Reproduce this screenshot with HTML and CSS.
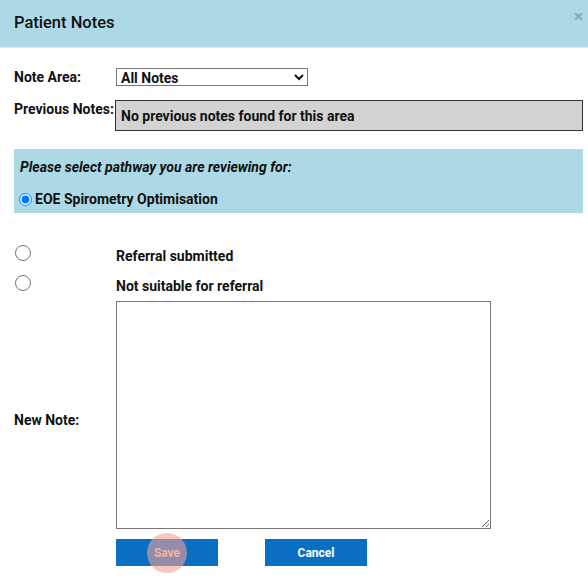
FILE: index.html
```html
<!DOCTYPE html>
<html>
<head>
<meta charset="utf-8">
<link rel="stylesheet" href="styles.css">
</head>
<body>
<div class="dialog">
  <div class="header">
    <span class="title">Patient Notes</span>
    <span class="close">×</span>
  </div>
  <div class="content">
    <div class="row row-area">
      <label class="lbl">Note Area:</label>
      <select class="area-select">
        <option>All Notes</option>
      </select>
    </div>
    <div class="row row-prev">
      <label class="lbl lbl-prev">Previous Notes:</label>
      <div class="prev-box">No previous notes found for this area</div>
    </div>
    <div class="pathway">
      <div class="pathway-q">Please select pathway you are reviewing for:</div>
      <div class="pathway-opt">
        <input type="radio" name="pw" checked class="pw-radio">
        <span>EOE Spirometry Optimisation</span>
      </div>
    </div>
    <div class="options">
      <div class="opt opt-1">
        <input type="radio" name="outcome" class="out-radio">
        <span class="opt-label">Referral submitted</span>
      </div>
      <div class="opt opt-2">
        <input type="radio" name="outcome" class="out-radio">
        <span class="opt-label">Not suitable for referral</span>
      </div>
    </div>
    <div class="row row-note">
      <label class="lbl lbl-note">New Note:</label>
      <textarea class="note"></textarea>
    </div>
    <div class="buttons">
      <button class="btn btn-save">Save</button>
      <button class="btn">Cancel</button>
    </div>
  </div>
</div>
</body>
</html>
```

FILE: styles.css
```css
* { box-sizing: border-box; }
html, body {
  margin: 0;
  padding: 0;
  background: #fff;
}
body {
  font-family: Roboto, "Liberation Sans", sans-serif;
  color: #111;
  width: 588px;
  height: 580px;
  overflow: hidden;
}
.header {
  height: 48px;
  background: #add8e6;
  border-bottom: 1px solid #e4e8ea;
  display: flex;
  align-items: center;
  justify-content: space-between;
  padding: 0 5px 2px 14px;
}
.title {
  font-size: 16.5px;
  font-weight: 500;
  color: #111;
}
.close {
  font-size: 17px;
  font-weight: 700;
  color: #8fa6ad;
  line-height: 1;
  margin-top: -12px;
}
.content {
  padding: 20px 5px 0 14px;
  font-size: 14px;
  font-weight: 700;
}
.row {
  display: grid;
  grid-template-columns: 102px 1fr;
}
.lbl {
  line-height: 16px;
}
.row-area {
  align-items: center;
  height: 18px;
}
.area-select {
  width: 192px;
  height: 18px;
  font-family: Roboto, "Liberation Sans", sans-serif;
  font-size: 14px;
  font-weight: 700;
  color: #111;
  padding: 0;
  border: 1px solid #767676;
  border-radius: 0;
  background: #fff;
}
.row-prev {
  margin-top: 14px;
  grid-template-columns: 101px 1fr;
}
.lbl-prev {
  padding-top: 1px;
}
.prev-box {
  height: 31px;
  background: #d3d3d3;
  border: 1px solid #333;
  padding-left: 5px;
  display: flex;
  align-items: center;
  line-height: 16px;
  padding-top: 1px;
}
.pathway {
  margin-top: 18px;
  background: #add8e6;
  height: 64px;
  padding: 10px 6px 0 0;
}
.pathway-q {
  font-style: italic;
  line-height: 16px;
  padding-left: 6px;
}
.pathway-opt {
  margin-top: 16px;
  display: flex;
  align-items: center;
  line-height: 16px;
}
.pw-radio {
  width: 13px;
  height: 13px;
  margin: 0 3px 0 5px;
}
.options {
  margin-top: 31px;
}
.opt {
  display: grid;
  grid-template-columns: 102px 1fr;
  align-items: start;
}
.opt-1 { height: 30px; }
.opt-2 { height: 27px; }
.out-radio {
  width: 16px;
  height: 16px;
  margin: 1px 0 0 1px;
}
.opt-label {
  line-height: 16px;
  padding-top: 4px;
}
.row-note {
  align-items: center;
}
.lbl-note {
  padding-top: 10px;
}
.note {
  width: 375px;
  height: 228px;
  border: 1px solid #767676;
  resize: both;
  margin: 0;
  display: block;
}
.buttons {
  margin-top: 10px;
  padding-left: 102px;
  display: flex;
  gap: 47px;
}
.btn {
  width: 102px;
  height: 27px;
  border: none;
  background: #0a6fc2;
  color: #fff;
  font-family: Roboto, "Liberation Sans", sans-serif;
  font-size: 12px;
  font-weight: 700;
  padding: 0;
  margin: 0;
}
.btn-save {
  position: relative;
  color: #f3d0cf;
}
.btn-save::after {
  content: "";
  position: absolute;
  left: 31px;
  top: -6px;
  width: 40px;
  height: 40px;
  border-radius: 50%;
  background: rgba(240, 160, 150, 0.6);
}
```
